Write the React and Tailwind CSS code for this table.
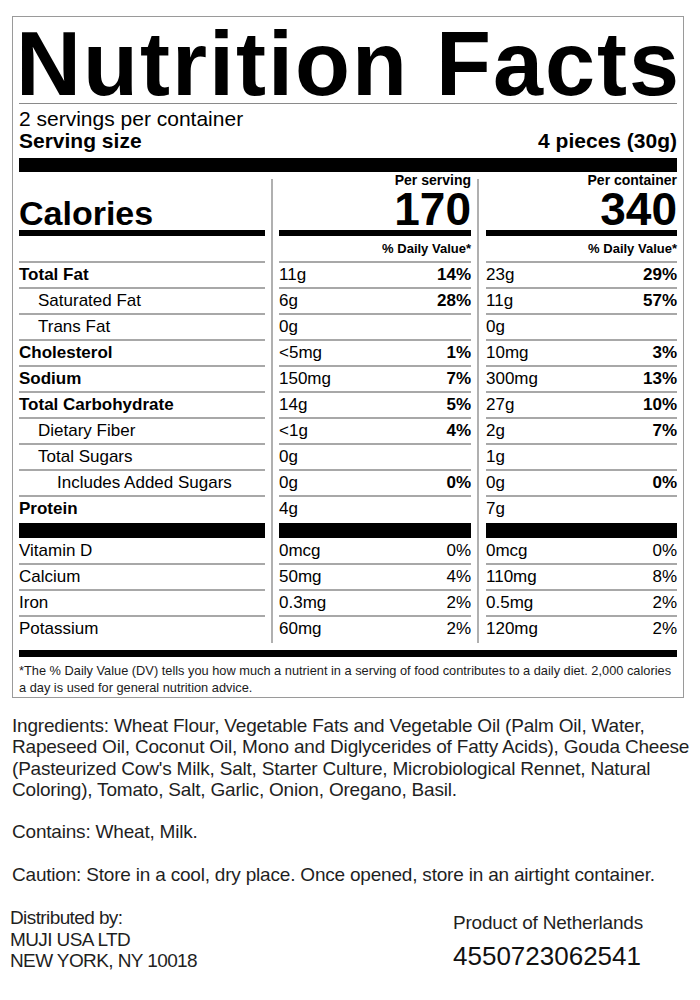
const rows = [
  { label: 'Total Fat', bold: true, indent: 0, a: '11g', ap: '14%', b: '23g', bp: '29%' },
  { label: 'Saturated Fat', indent: 1, a: '6g', ap: '28%', b: '11g', bp: '57%' },
  { label: 'Trans Fat', indent: 1, a: '0g', ap: '', b: '0g', bp: '' },
  { label: 'Cholesterol', bold: true, indent: 0, a: '<5mg', ap: '1%', b: '10mg', bp: '3%' },
  { label: 'Sodium', bold: true, indent: 0, a: '150mg', ap: '7%', b: '300mg', bp: '13%' },
  { label: 'Total Carbohydrate', bold: true, indent: 0, a: '14g', ap: '5%', b: '27g', bp: '10%' },
  { label: 'Dietary Fiber', indent: 1, a: '<1g', ap: '4%', b: '2g', bp: '7%' },
  { label: 'Total Sugars', indent: 1, a: '0g', ap: '', b: '1g', bp: '' },
  { label: 'Includes Added Sugars', indent: 2, a: '0g', ap: '0%', b: '0g', bp: '0%' },
];

const vitamins = [
  { label: 'Vitamin D', a: '0mcg', ap: '0%', b: '0mcg', bp: '0%' },
  { label: 'Calcium', a: '50mg', ap: '4%', b: '110mg', bp: '8%' },
  { label: 'Iron', a: '0.3mg', ap: '2%', b: '0.5mg', bp: '2%' },
  { label: 'Potassium', a: '60mg', ap: '2%', b: '120mg', bp: '2%' },
];

function Line() {
  return <div className="h-[2px] bg-[#a8a8a8]" />;
}

function Row({ children, className = '' }) {
  return (
    <div className={'h-[24px] leading-[24px] text-[17px] flex justify-between whitespace-nowrap ' + className}>
      {children}
    </div>
  );
}

function LabelColumn() {
  return (
    <div className="w-[246px] flex flex-col pb-[2px]">
      <div className="h-[58px] flex items-end">
        <div className="text-[34px] leading-[34px] font-bold">Calories</div>
      </div>
      <div className="h-[6px] bg-black" />
      <div className="h-[25px]" />
      <Line />
      {rows.map((r) => (
        <div key={r.label}>
          <Row className={(r.bold ? 'font-bold ' : '') + (r.indent === 1 ? 'pl-[19px]' : r.indent === 2 ? 'pl-[38px]' : '')}>
            <span>{r.label}</span>
          </Row>
          <Line />
        </div>
      ))}
      <Row className="font-bold">
        <span>Protein</span>
      </Row>
      <div className="mt-[2px] h-[15px] bg-black" />
      <div className="h-[1px]" />
      {vitamins.map((v, i) => (
        <div key={v.label}>
          <Row>
            <span>{v.label}</span>
          </Row>
          {i < vitamins.length - 1 && <Line />}
        </div>
      ))}
    </div>
  );
}

function ValueColumn({ width, heading, big, which }) {
  return (
    <div className={'flex flex-col pb-[2px] ' + width}>
      <div className="h-[58px] flex flex-col items-end">
        <div className="text-[14px] leading-[16px] font-bold">{heading}</div>
        <div className="text-[46px] leading-[42px] font-bold">{big}</div>
      </div>
      <div className="h-[6px] bg-black" />
      <div className="h-[25px] leading-[25px] text-[13px] font-bold text-right">% Daily Value*</div>
      <Line />
      {rows.map((r) => (
        <div key={r.label}>
          <Row>
            <span>{which === 'a' ? r.a : r.b}</span>
            <span className="font-bold">{which === 'a' ? r.ap : r.bp}</span>
          </Row>
          <Line />
        </div>
      ))}
      <Row>
        <span>{which === 'a' ? '4g' : '7g'}</span>
      </Row>
      <div className="mt-[2px] h-[15px] bg-black" />
      <div className="h-[1px]" />
      {vitamins.map((v, i) => (
        <div key={v.label}>
          <Row>
            <span>{which === 'a' ? v.a : v.b}</span>
            <span>{which === 'a' ? v.ap : v.bp}</span>
          </Row>
          {i < vitamins.length - 1 && <Line />}
        </div>
      ))}
    </div>
  );
}

export default function App() {
  return (
    <div className="w-[700px] h-[1000px] bg-white text-black [font-family:'Liberation_Sans',Arial,sans-serif]">
      <div className="pt-[16px] pl-[12px]">
        <div className="w-[672px] border border-[#9a9a9a] px-[6px]">
          <div className="pt-[8px]">
            <div className="h-[78px] leading-[78px] text-[90px] font-bold tracking-[2px] ml-[-3px] whitespace-nowrap">
              Nutrition Facts
            </div>
          </div>
          <div className="h-px bg-[#8a8a8a]" />
          <div className="mt-[4px] text-[21px] leading-[22px]">2 servings per container</div>
          <div className="flex justify-between text-[21px] leading-[22px] font-bold">
            <span>Serving size</span>
            <span>4 pieces (30g)</span>
          </div>
          <div className="mt-[6px] h-[14px] bg-black" />
          <div className="flex">
            <LabelColumn />
            <div className="w-[14px] flex justify-center pt-[7px]">
              <div className="w-[2px] bg-[#b0b0b0]" />
            </div>
            <ValueColumn width="w-[192px]" heading="Per serving" big="170" which="a" />
            <div className="w-[15px] flex pl-[6px] pt-[7px]">
              <div className="w-[2px] bg-[#b0b0b0]" />
            </div>
            <ValueColumn width="w-[191px]" heading="Per container" big="340" which="b" />
          </div>
          <div className="mt-[7px] h-[7px] bg-black" />
          <div className="mt-[5px] pb-[1px] text-[12.8px] leading-[17px] text-[#1a1a1a] whitespace-nowrap">
            *The % Daily Value (DV) tells you how much a nutrient in a serving of food contributes to a daily diet. 2,000 calories
            <br />
            a day is used for general nutrition advice.
          </div>
        </div>
      </div>

      <div className="mt-[17px] pl-[12px] pr-[4px] text-[19px] leading-[21.3px] tracking-[-0.2px] text-[#1f1f1f]">
        <div className="whitespace-nowrap">
          Ingredients: Wheat Flour, Vegetable Fats and Vegetable Oil (Palm Oil, Water,
          <br />
          Rapeseed Oil, Coconut Oil, Mono and Diglycerides of Fatty Acids), Gouda Cheese
          <br />
          (Pasteurized Cow's Milk, Salt, Starter Culture, Microbiological Rennet, Natural
          <br />
          Coloring), Tomato, Salt, Garlic, Onion, Oregano, Basil.
        </div>
        <div className="mt-[21.3px]">Contains: Wheat, Milk.</div>
        <div className="mt-[21.3px]">Caution: Store in a cool, dry place. Once opened, store in an airtight container.</div>
      </div>

      <div className="mt-[22px] pl-[10px] flex text-[#1f1f1f]">
        <div className="w-[443px] text-[19px] leading-[21.3px] tracking-[-0.6px]">
          <div>Distributed by:</div>
          <div>MUJI USA LTD</div>
          <div>NEW YORK, NY 10018</div>
        </div>
        <div className="pt-[5px]">
          <div className="text-[19px] leading-[21.3px] tracking-[-0.2px]">Product of Netherlands</div>
          <div className="mt-[8px] text-[26px] leading-[28px] text-[#111]">4550723062541</div>
        </div>
      </div>
    </div>
  );
}
